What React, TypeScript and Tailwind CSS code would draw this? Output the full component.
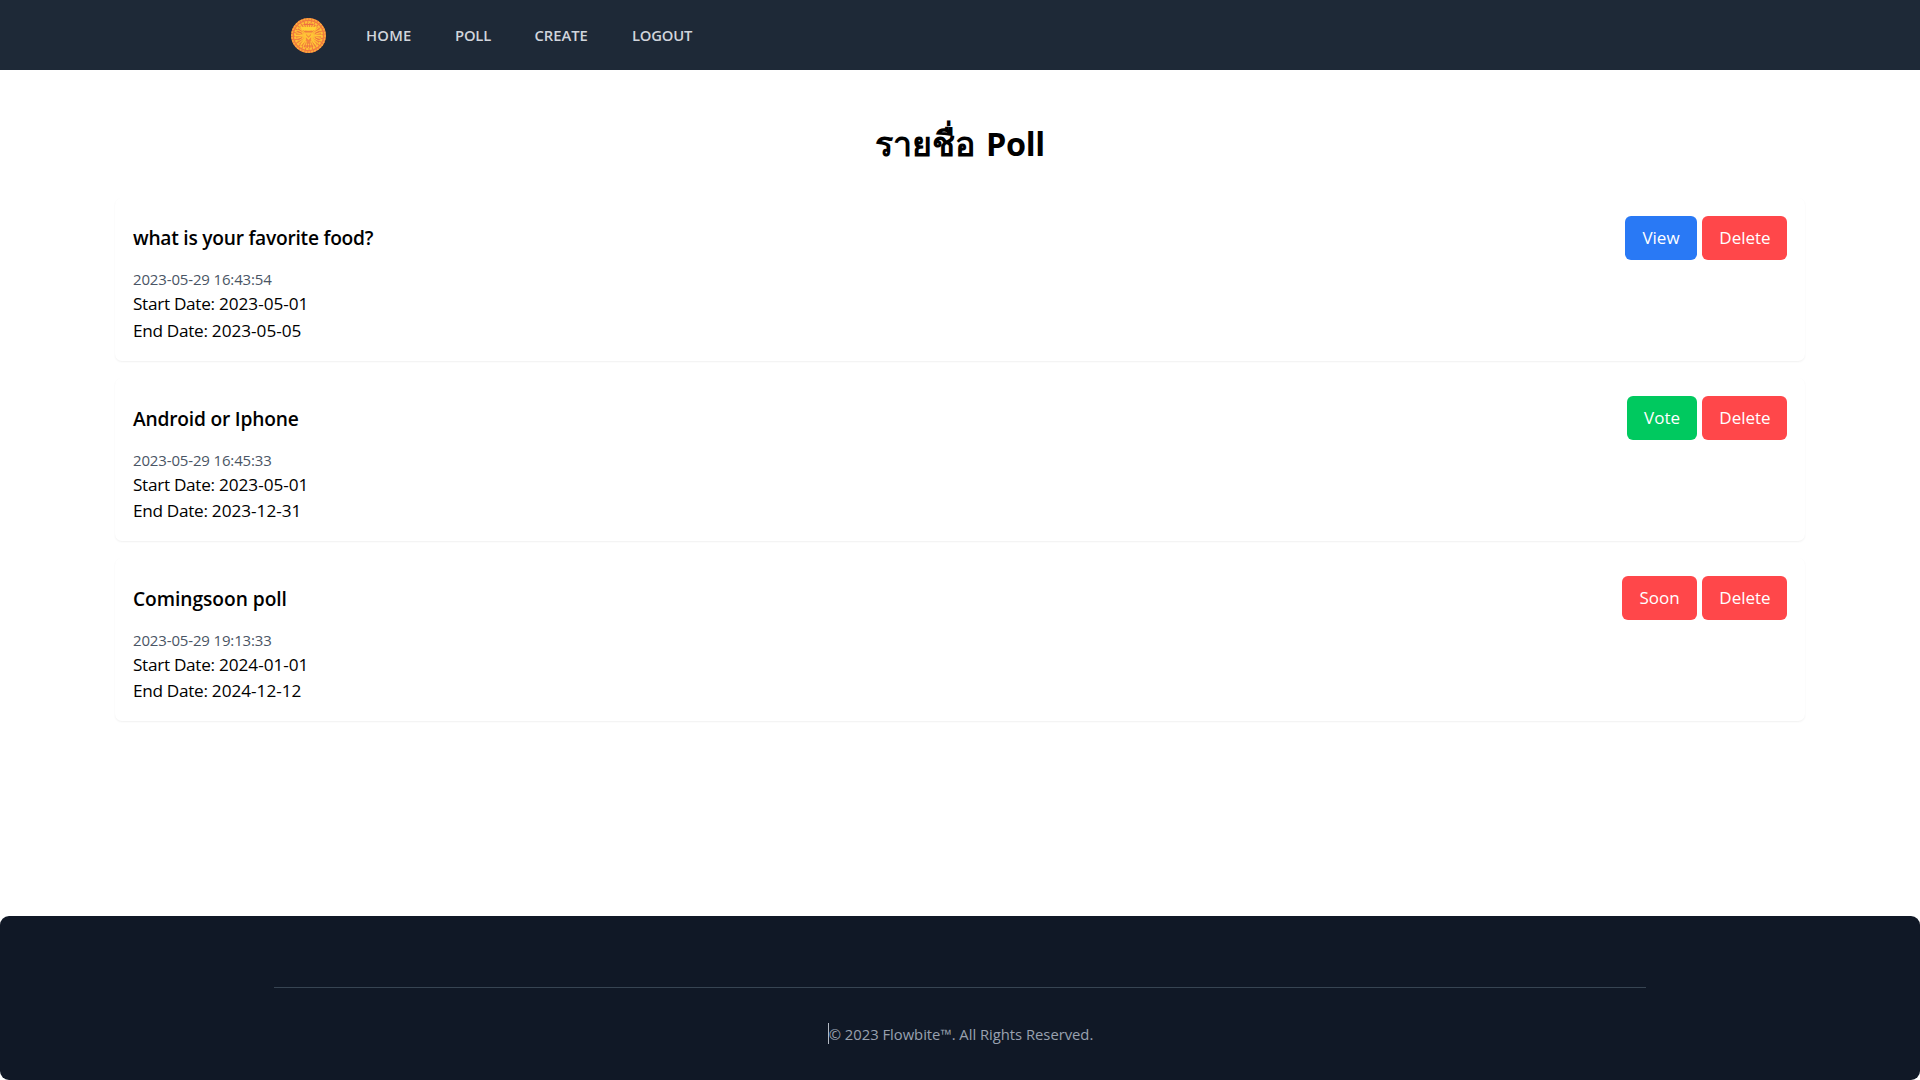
type Poll = {
  title: string;
  titleTracking: string;
  created: string;
  start: string;
  end: string;
  action: string;
  actionClass: string;
  top: string;
  endGap: string;
};

const polls: Poll[] = [
  { title: 'what is your favorite food?', titleTracking: 'tracking-[-0.25px]', created: '2023-05-29 16:43:54', start: '2023-05-01', end: '2023-05-05', action: 'View', actionClass: 'w-[72px] bg-[#2979f5]', top: 'pt-[5px]', endGap: 'mt-px' },
  { title: 'Android or Iphone', titleTracking: 'tracking-[-0.2px]', created: '2023-05-29 16:45:33', start: '2023-05-01', end: '2023-12-31', action: 'Vote', actionClass: 'w-[70px] bg-[#00c95f]', top: 'pt-[6px]', endGap: 'mt-0' },
  { title: 'Comingsoon poll', titleTracking: 'tracking-[-0.05px]', created: '2023-05-29 19:13:33', start: '2024-01-01', end: '2024-12-12', action: 'Soon', actionClass: 'w-[75px] bg-[#ff474a]', top: 'pt-[6px]', endGap: 'mt-0' },
];

const links = [
  { label: 'HOME', cls: 'w-[89px] tracking-[0.2px]' },
  { label: 'POLL', cls: 'w-[79.5px] tracking-[-0.2px]' },
  { label: 'CREATE', cls: 'w-[97.5px] tracking-[-0.05px]' },
  { label: 'LOGOUT', cls: 'w-[80px] tracking-[-0.2px]' },
];

const rays = Array.from({ length: 28 }, (_, i) => (i * 360) / 28);

function Logo() {
  return (
    <svg viewBox="0 0 70 70" className="size-[35px]">
      <circle cx="35" cy="35" r="35" fill="#f07a3e" />
      <circle cx="35" cy="35" r="33" fill="none" stroke="#fdb03a" strokeWidth="3" strokeDasharray="4 2" />
      <circle cx="35" cy="35" r="27" fill="none" stroke="#fec038" strokeWidth="4" strokeDasharray="5 2" />
      {rays.map((a) => (
        <path key={a} d="M35 35V10" stroke="#fec038" strokeWidth="2.6" transform={`rotate(${a} 35 35)`} />
      ))}
      <path d="M18 18H52L48 24H22Z" fill="#ffd035" />
      <path d="M25 26H45L42 29H28Z" fill="#f0803c" />
      <path d="M30 32L35 37L40 32V45L35 50L30 45Z" fill="#f5853d" />
      <path d="M27 33L35 42L43 33M20 53L28 43M50 53L42 43M8 35H22M48 35H62" fill="none" stroke="#ffc836" strokeWidth="2.6" />
      <path d="M27 56H43M31 50H39M25 13H45" stroke="#ee6f42" strokeWidth="2" />
      <path d="M14 27L22 31M56 27L48 31M14 44L22 39M56 44L48 39" stroke="#ee6f42" strokeWidth="2" />
    </svg>
  );
}

function Card({ poll }: { poll: Poll }) {
  return (
    <article className="flex h-[163px] items-start justify-between rounded-[7px] bg-white px-[18px] pt-[18px] shadow-[0_1px_2px_rgba(0,0,0,0.06)]">
      <div className={poll.top}>
        <h2 className={`text-[19.2px] leading-[34px] font-semibold ${poll.titleTracking}`}>{poll.title}</h2>
        <p className="mt-[12px] text-[15px] leading-[24px] tracking-[-0.15px] text-[#4a5565]">{poll.created}</p>
        <p className="text-[17.2px] leading-[26px] tracking-[-0.3px]">
          Start Date: <span className="tracking-[-0.02px]">{poll.start}</span>
        </p>
        <p className={`text-[17.2px] leading-[26px] tracking-[-0.3px] ${poll.endGap}`}>
          End Date: <span className="tracking-[-0.02px]">{poll.end}</span>
        </p>
      </div>
      <div className="flex gap-[5px] text-[17px] text-white">
        <button className={`h-[44px] rounded-[6px] ${poll.actionClass}`}>{poll.action}</button>
        <button className="h-[44px] w-[85px] rounded-[6px] bg-[#ff474a] pl-px">Delete</button>
      </div>
    </article>
  );
}

export default function App() {
  return (
    <div className="flex h-[1080px] flex-col overflow-hidden bg-white font-['Open_Sans','Noto_Sans',sans-serif] text-black">
      <nav className="flex h-[70px] items-center bg-[#1e2937] pl-[291px]">
        <Logo />
        <div className="ml-[40px] flex text-[14.8px] font-semibold text-[#d1d5dc]">
          {links.map((l) => (
            <a key={l.label} className={l.cls}>{l.label}</a>
          ))}
        </div>
      </nav>
      <main className="flex flex-1 flex-col px-[115px]">
        <h1 className="mt-[47px] h-[81px] text-center text-[34px] leading-[52px] font-bold">
          รายชื่อ <span className="ml-[2px] text-[32.4px] tracking-[-0.3px]">Poll</span>
        </h1>
        <div className="flex flex-col gap-[17px]">
          {polls.map((p) => (
            <Card key={p.title} poll={p} />
          ))}
        </div>
      </main>
      <footer className="h-[164px] rounded-[9px] bg-[#101826] px-[274px] pt-[71px]">
        <hr className="border-[#374452]" />
        <p className="mt-[35px] flex justify-center pl-px text-[14.8px] leading-[22px] text-[#99a1af]">
          <span className="h-[21px] w-px bg-[#b4bac4]" />
          <span className="tracking-[-0.02px] whitespace-nowrap">© 2023 Flowbite™. All Rights Reserved.</span>
        </p>
      </footer>
    </div>
  );
}
